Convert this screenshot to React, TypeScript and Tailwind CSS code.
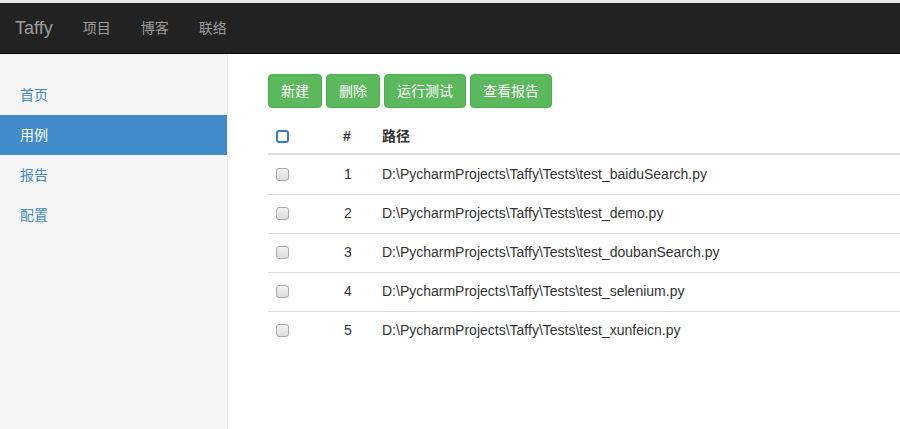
import React from "react";

const font = "font-['Liberation_Sans','Noto_Sans_CJK_SC',sans-serif]";

const navLinks = ["项目", "博客", "联络"];
const sideItems = [
  { label: "首页", active: false },
  { label: "用例", active: true },
  { label: "报告", active: false },
  { label: "配置", active: false },
];
const actions = ["新建", "删除", "运行测试", "查看报告"];
const cases = [
  "test_baiduSearch.py",
  "test_demo.py",
  "test_doubanSearch.py",
  "test_selenium.py",
  "test_xunfeicn.py",
];

function Checkbox({ focused = false }: { focused?: boolean }) {
  return focused ? (
    <span className="block h-[13px] w-[13px] rounded-[3px] border-2 border-[#3b7dc4] bg-white" />
  ) : (
    <span className="block h-[13px] w-[13px] rounded-[3px] border border-[#a9a9a9] bg-gradient-to-b from-[#f3f3f3] to-[#dcdcdc]" />
  );
}

export default function App() {
  return (
    <div className={`${font} flex h-[429px] w-[900px] flex-col overflow-hidden bg-white text-[14px] text-[#333]`}>
      <div className="h-[3px] bg-[#e7e7e7]" />
      {/* navbar */}
      <div className="flex h-[51px] items-center border-b border-[#080808] bg-[#222]">
        <span className="px-[15px] text-[18px] text-[#9d9d9d]">Taffy</span>
        {navLinks.map((n) => (
          <span key={n} className="px-[15px] text-[#9d9d9d]">
            {n}
          </span>
        ))}
      </div>

      <div className="flex flex-1">
        {/* sidebar */}
        <div className="w-[228px] border-r border-[#eee] bg-[#f5f5f5] pt-[21px]">
          {sideItems.map((s) => (
            <div
              key={s.label}
              className={`flex h-[40px] items-center px-[20px] ${
                s.active ? "bg-[#428bca] text-white" : "text-[#428bca]"
              }`}
            >
              {s.label}
            </div>
          ))}
        </div>

        {/* main */}
        <div className="flex-1 pl-[40px] pt-[20px]">
          <div className="flex gap-[4px]">
            {actions.map((a) => (
              <button
                key={a}
                className="h-[34px] rounded-[4px] border border-[#4cae4c] bg-[#5cb85c] px-[12px] leading-[20px] text-white"
              >
                {a}
              </button>
            ))}
          </div>

          <div className="mt-[8px]">
            <div className="flex h-[39px] items-center border-b-2 border-[#ddd] pt-[3px] font-bold">
              <div className="w-[67px] pl-[8px]">
                <Checkbox focused />
              </div>
              <div className="w-[47px] pl-[8px]">#</div>
              <div className="flex-1">路径</div>
            </div>
            {cases.map((c, i) => (
              <div
                key={c}
                className={`flex h-[39px] items-center pb-[1px] ${i > 0 ? "border-t border-[#ddd]" : ""}`}
              >
                <div className="w-[67px] pl-[8px]">
                  <Checkbox />
                </div>
                <div className="w-[47px] pl-[9px]">{i + 1}</div>
                <div className="flex-1">D:\PycharmProjects\Taffy\Tests\{c}</div>
              </div>
            ))}
          </div>
        </div>
      </div>
    </div>
  );
}
